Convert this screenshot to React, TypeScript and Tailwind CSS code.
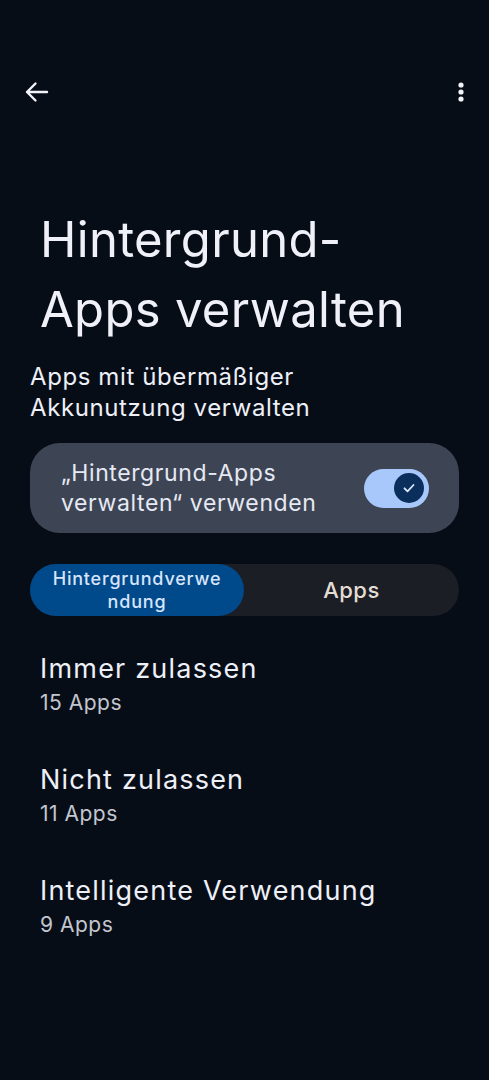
import React from "react";

const rows = [
  { title: "Immer zulassen", sub: "15 Apps" },
  { title: "Nicht zulassen", sub: "11 Apps" },
  { title: "Intelligente Verwendung", sub: "9 Apps" },
];

export default function App() {
  return (
    <div
      className="h-[1080px] w-full overflow-hidden bg-[#070d17] pt-[64px] text-[#eef0f8]"
      style={{ fontFamily: "Inter, 'Noto Sans', sans-serif" }}
    >
      {/* top bar */}
      <div className="flex h-[56px] items-center justify-between pl-[22px] pr-[24px]">
        <svg width="28" height="28" viewBox="0 0 28 28" fill="none">
          <path
            d="M25 14H5M13.5 5.5L5 14l8.5 8.5"
            stroke="#f2f3f8"
            strokeWidth="2.4"
            strokeLinecap="round"
            strokeLinejoin="round"
          />
        </svg>
        <svg width="8" height="24" viewBox="0 0 8 24">
          <circle cx="4" cy="5" r="2.6" fill="#f2f3f8" />
          <circle cx="4" cy="12" r="2.6" fill="#f2f3f8" />
          <circle cx="4" cy="19" r="2.6" fill="#f2f3f8" />
        </svg>
      </div>

      {/* heading */}
      <h1 className="mt-[85px] px-[40px] text-[49px] leading-[70px] font-normal tracking-[0.3px] text-[#f0f1f8]">
        Hintergrund-
        <br />
        Apps verwalten
      </h1>
      <p className="mt-[16px] px-[30px] text-[24px] leading-[31px] tracking-[0.6px] text-[#eef0f8]">
        Apps mit übermäßiger
        <br />
        Akkunutzung verwalten
      </p>

      {/* main switch card */}
      <div className="mx-[30px] mt-[20px] flex h-[90px] items-center justify-between rounded-[30px] bg-[#3d4555] pl-[31px] pr-[30px]">
        <div className="text-[23px] leading-[30px] tracking-[0.6px] text-[#e6e9f3]">
          „Hintergrund-Apps
          <br />
          verwalten“ verwenden
        </div>
        <div className="flex h-[39px] w-[65px] items-center justify-end rounded-full bg-[#a8c8fb] pr-[5px]">
          <div className="flex h-[30px] w-[30px] items-center justify-center rounded-full bg-[#0b2f5d]">
            <svg width="16" height="16" viewBox="0 0 16 16" fill="none">
              <path
                d="M3.5 8.3l3 3 6-6.3"
                stroke="#dce7ff"
                strokeWidth="1.8"
                strokeLinecap="round"
                strokeLinejoin="round"
              />
            </svg>
          </div>
        </div>
      </div>

      {/* segmented */}
      <div className="mx-[30px] mt-[31px] flex h-[52px] rounded-full bg-[#1b1e25]">
        <div className="flex w-[214px] flex-col items-center justify-center rounded-full bg-[#004a8b] text-center text-[18px] font-medium leading-[23px] tracking-[0.8px] text-[#d8e4fb]">
          <span>Hintergrundverwe</span>
          <span>ndung</span>
        </div>
        <div className="flex flex-1 items-center justify-center text-[22px] font-medium tracking-[0.5px] text-[#e4ddd3]">
          Apps
        </div>
      </div>

      {/* list */}
      <div className="mt-[36px] flex flex-col gap-[45px] px-[40px]">
        {rows.map((r) => (
          <div key={r.title} className="flex flex-col gap-[2px]">
            <div className="text-[27px] leading-[34px] tracking-[1.2px] text-[#eef0f8]">{r.title}</div>
            <div className="text-[21px] leading-[30px] tracking-[0.5px] text-[#c3c6cf]">{r.sub}</div>
          </div>
        ))}
      </div>
    </div>
  );
}
